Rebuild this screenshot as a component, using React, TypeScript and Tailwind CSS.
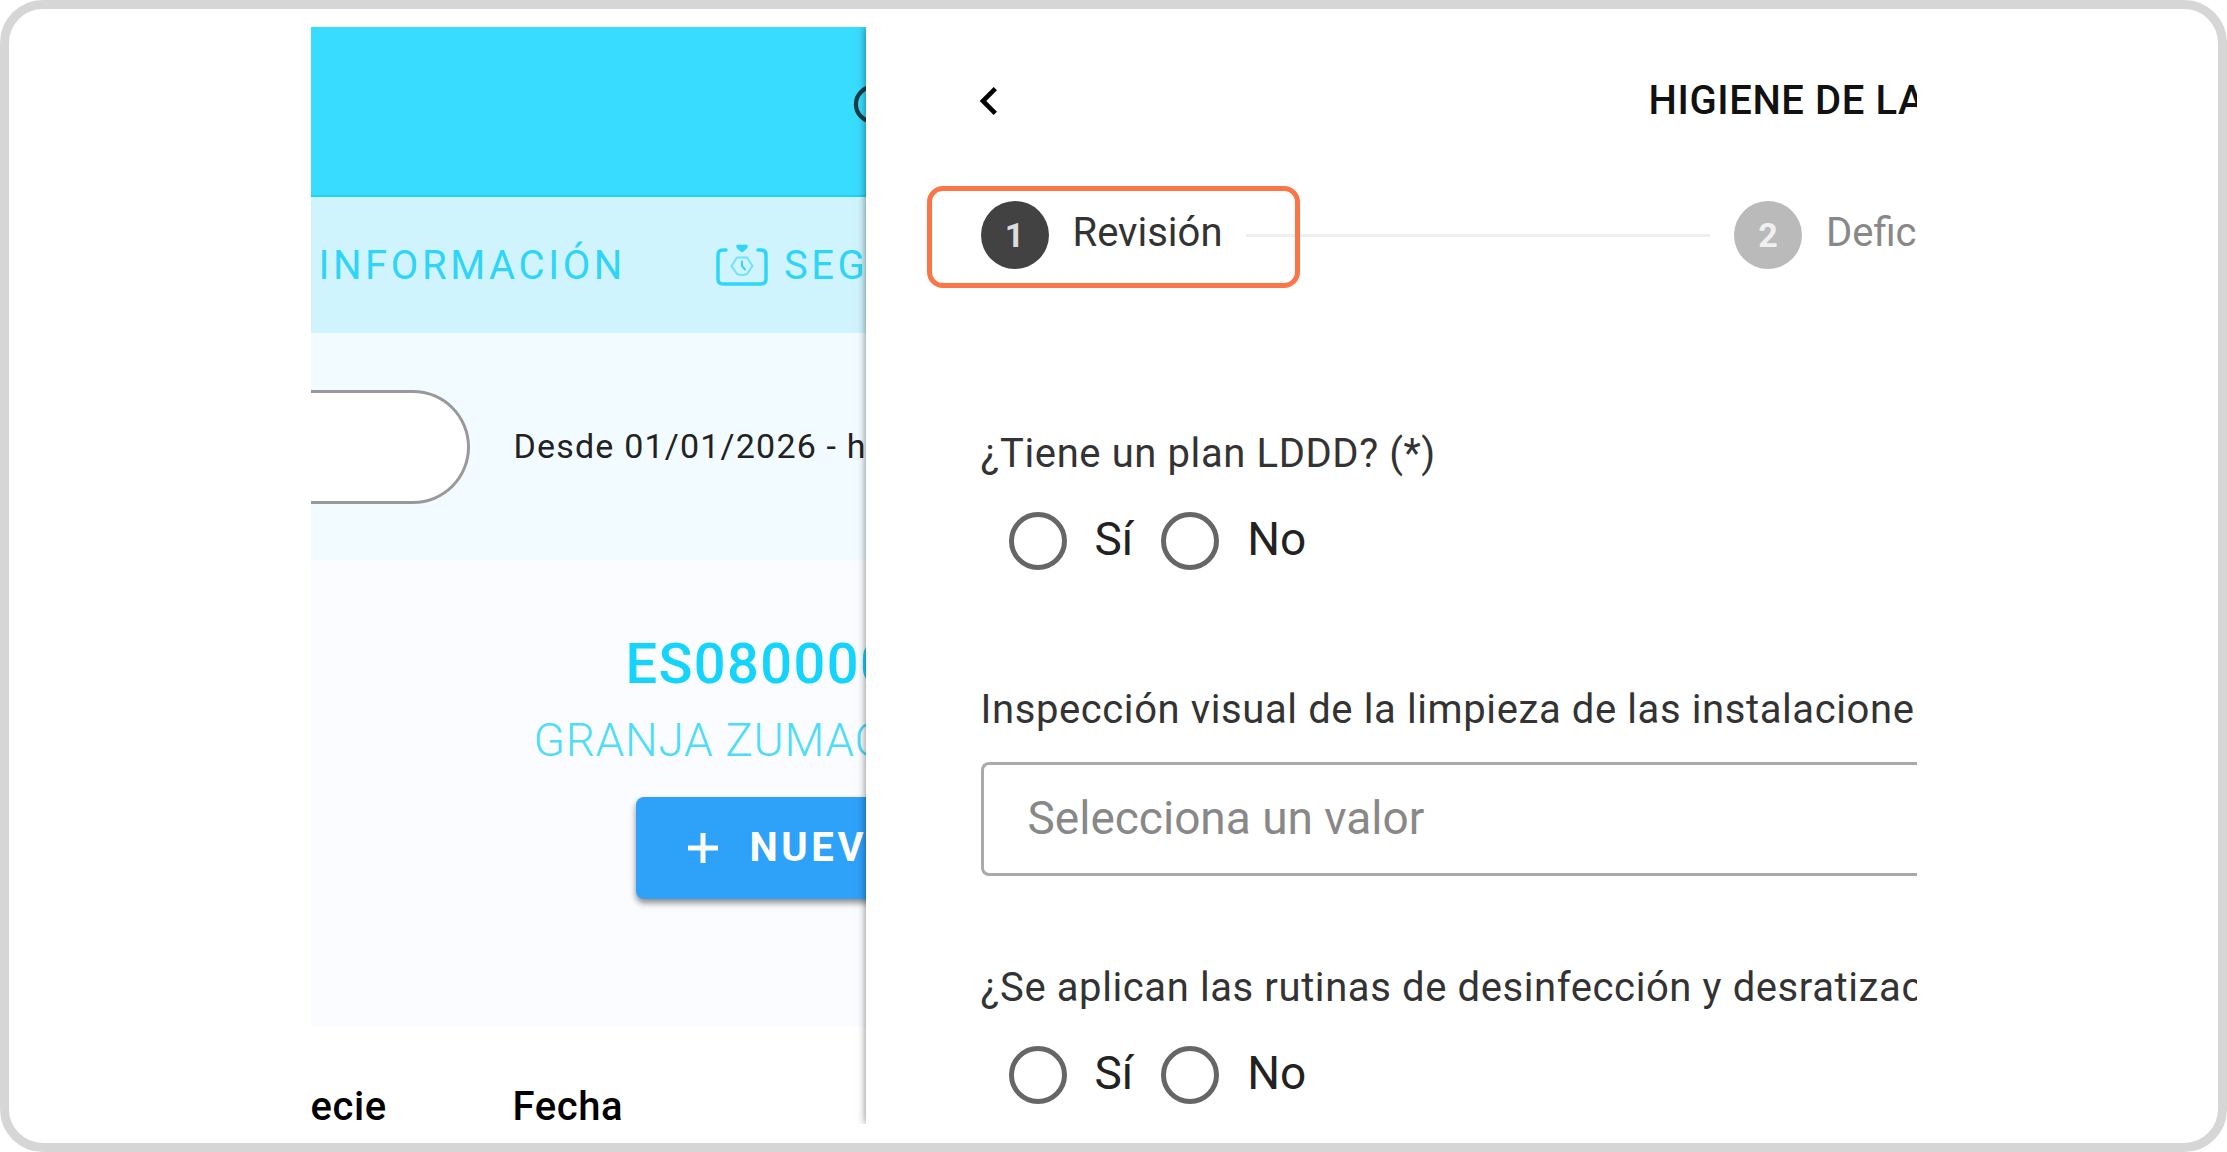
import React from 'react';
import { clsx } from 'clsx';

interface YesNoQuestionProps {
  name: string;
  label: string;
}

interface StepProps {
  number: number;
  label: string;
  active?: boolean;
}

const SearchIcon = () => (
  <svg viewBox="0 0 24 24" className="size-[68px] flex-none" fill="none" stroke="#1d3c46" strokeWidth="1.5">
    <circle cx="9.6" cy="9.6" r="6.1" />
    <path d="M14.2 14.2L20 20" />
  </svg>
);

const ChevronLeftIcon = () => (
  <svg viewBox="0 0 24 24" className="size-14" fill="currentColor">
    <path d="M15.41,16.58L10.83,12L15.41,7.41L14,6L8,12L14,18L15.41,16.58Z" />
  </svg>
);

const TrackingIcon = () => (
  <svg viewBox="0 0 52 44" className="h-11 w-[52px] flex-none" fill="none" stroke="currentColor" strokeLinecap="round">
    <path d="M10 6H7Q2 6 2 11V35Q2 40 7 40H45Q50 40 50 35V11Q50 6 45 6H42" strokeWidth="3.5" />
    <path d="M20.5 1Q23.5 0 26 1Q28.5 0 31.5 1Q33 4 26 8.5Q19 4 20.5 1Z" fill="currentColor" stroke="none" />
    <path d="M21 13.5H31L36.5 22L31 30Q26 32 21 30L15.5 22Z" strokeWidth="2" strokeLinejoin="round" opacity="0.6" />
    <path d="M26 17.5V22L29 25.5" strokeWidth="2" />
  </svg>
);

const PlusIcon = () => (
  <svg viewBox="0 0 30 30" className="size-[30px] flex-none" stroke="currentColor" strokeWidth="5">
    <path d="M15 0V30M0 15H30" />
  </svg>
);

const Step = ({ number, label, active }: StepProps) => (
  <div className="relative flex flex-none items-center gap-6">
    <span
      className={clsx(
        'flex size-[68px] items-center justify-center rounded-full text-[34px] font-bold',
        active ? 'bg-[#424242] text-[#dddddd]' : 'bg-[#bababa] text-[#f0f0f0]'
      )}>
      {number}
    </span>
    <span className={clsx('pb-1 text-[40px]', active ? 'text-[#333333]' : 'text-[#888888]')}>{label}</span>
    {active && (
      <span className="absolute -top-[15px] -bottom-[19px] -left-[54px] -right-[78px] z-10 rounded-2xl border-[5px] border-[#fb7548]" />
    )}
  </div>
);

const YesNoQuestion = ({ name, label }: YesNoQuestionProps) => (
  <fieldset>
    <legend className="whitespace-nowrap text-[40px] leading-[58px] tracking-[0.015em] text-[#333333]">{label}</legend>
    <div className="mt-[18px] flex h-20 items-center gap-7 pl-7">
      {['Sí', 'No'].map(option => (
        <label key={option} className="flex items-center gap-7 text-[46px] leading-[54px] text-[#222222]">
          <input
            type="radio"
            name={name}
            value={option}
            className="size-[58px] appearance-none rounded-full border-[5px] border-[#666666] bg-white checked:bg-[#424242]"
          />
          <span className="pb-1">{option}</span>
        </label>
      ))}
    </div>
  </fieldset>
);

const FarmPage = () => (
  <div className="w-[555px] flex-none overflow-hidden whitespace-nowrap">
    <header className="flex h-[170px] items-center justify-end border-b-2 border-[#1fd0f7] bg-[#38dcff]">
      <button type="button" aria-label="Buscar" className="-mr-[48px]">
        <SearchIcon />
      </button>
    </header>
    <nav className="flex h-[136px] items-center gap-[90px] bg-[#cff4fe] pt-[2px] pl-2 text-[40px] tracking-[0.09em] text-[#2fd5f8]">
      <a href="#informacion">INFORMACIÓN</a>
      <a href="#seguimiento" className="flex items-center gap-4">
        <TrackingIcon />
        SEG
      </a>
    </nav>
    <div className="flex h-[227px] items-center gap-11 bg-[#f2fbff]">
      <input
        type="text"
        aria-label="Buscar explotación"
        className="h-[114px] w-[159px] flex-none rounded-r-full border-3 border-l-0 border-[#999999] bg-white px-6 text-[34px]"
      />
      <span className="text-[34px] tracking-[0.035em] text-[#222222]">Desde 01/01/2026 - h</span>
    </div>
    <section className="h-[467px] bg-[#fbfcff] pt-[68px]">
      <h1 className="pl-[315px] text-[56px] leading-[72px] font-medium tracking-wide text-[#14d4fb]">ES080000</h1>
      <h2 className="pl-[223px] text-[46px] leading-[80px] font-light tracking-[0.015em] text-[#4edcf9]">GRANJA ZUMAC</h2>
      <button
        type="button"
        className="mt-[17px] ml-[325px] flex h-[102px] items-center gap-8 rounded-lg bg-[#2ea1f9] px-[52px] text-[40px] font-bold tracking-[0.09em] text-white shadow-[0_4px_6px_rgba(0,0,0,0.45)]">
        <PlusIcon />
        NUEV
      </button>
    </section>
    <table className="w-full table-fixed text-left text-[40px] leading-[34px] tracking-[0.015em] text-black">
      <thead>
        <tr>
          <th className="w-[202px] pt-[63px] font-medium">ecie</th>
          <th className="pt-[63px] font-medium">Fecha</th>
        </tr>
      </thead>
    </table>
  </div>
);

const InspectionDrawer = () => (
  <aside className="relative min-w-0 flex-1 overflow-hidden bg-white">
    <header className="flex h-[148px] items-center pl-[95px]">
      <button type="button" aria-label="Volver" className="text-black">
        <ChevronLeftIcon />
      </button>
      <h2 className="ml-auto w-[268px] flex-none whitespace-nowrap text-[40px] font-medium tracking-[0.015em] text-[#111111]">
        HIGIENE DE LA
      </h2>
    </header>
    <div className="flex h-[120px] items-center gap-6 pl-[115px]">
      <Step number={1} label="Revisión" active />
      <div className="h-[3px] flex-1 bg-[#efefef]" />
      <Step number={2} label="Defic" />
    </div>
    <form className="pt-[130px] pb-2 pl-[115px]">
      <YesNoQuestion name="plan" label="¿Tiene un plan LDDD? (*)" />
      <div className="mt-[100px] mb-[83px]">
        <label htmlFor="limpieza" className="block whitespace-nowrap text-[40px] leading-[58px] tracking-[0.015em] text-[#333333]">
          Inspección visual de la limpieza de las instalacione
        </label>
        <select
          id="limpieza"
          className="mt-[23px] block h-[114px] w-full appearance-none rounded-l-lg border-3 border-r-0 border-[#aaaaaa] bg-white pb-[2px] pl-11 text-[46px] text-[#888888]">
          <option>Selecciona un valor</option>
        </select>
      </div>
      <YesNoQuestion name="rutinas" label="¿Se aplican las rutinas de desinfección y desratizac" />
    </form>
  </aside>
);

export default function App() {
  return (
    <div className="min-h-screen rounded-[43px] border-[9px] border-[#d6d6d6] bg-white py-[18px] font-[Roboto,sans-serif]">
      <div className="mx-auto flex w-full max-w-[1606px] overflow-hidden">
        <FarmPage />
        <div className="relative z-10 flex min-w-0 flex-1 shadow-[0_0_8px_rgba(0,0,0,0.5)]">
          <InspectionDrawer />
        </div>
      </div>
    </div>
  );
}
